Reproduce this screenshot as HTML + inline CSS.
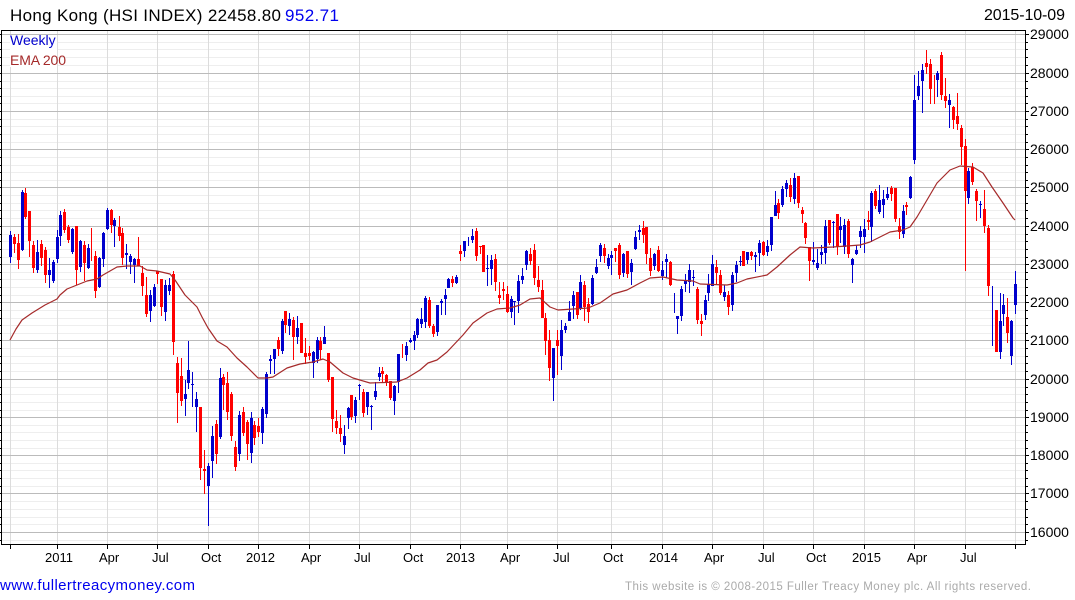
<!DOCTYPE html>
<html><head><meta charset="utf-8"><title>Hong Kong (HSI INDEX)</title>
<style>html,body{margin:0;padding:0;background:#fff;width:1075px;height:600px;overflow:hidden}svg{display:block}text{font-family:"Liberation Sans",Arial,sans-serif}</style></head>
<body>
<svg width="1075" height="600" viewBox="0 0 1075 600" xmlns="http://www.w3.org/2000/svg">
<g fill="none" shape-rendering="crispEdges">
<path stroke="#eeeeee" d="M2 42.5H1025M2 49.5H1025M2 57.5H1025M2 65.5H1025M2 81.5H1025M2 88.5H1025M2 96.5H1025M2 103.5H1025M2 119.5H1025M2 126.5H1025M2 134.5H1025M2 142.5H1025M2 157.5H1025M2 165.5H1025M2 172.5H1025M2 180.5H1025M2 195.5H1025M2 203.5H1025M2 210.5H1025M2 218.5H1025M2 234.5H1025M2 241.5H1025M2 249.5H1025M2 257.5H1025M2 272.5H1025M2 279.5H1025M2 287.5H1025M2 295.5H1025M2 310.5H1025M2 318.5H1025M2 325.5H1025M2 333.5H1025M2 348.5H1025M2 356.5H1025M2 363.5H1025M2 371.5H1025M2 387.5H1025M2 394.5H1025M2 402.5H1025M2 410.5H1025M2 425.5H1025M2 432.5H1025M2 440.5H1025M2 448.5H1025M2 463.5H1025M2 470.5H1025M2 478.5H1025M2 486.5H1025M2 501.5H1025M2 509.5H1025M2 517.5H1025M2 524.5H1025M2 540.5H1025"/>
<path stroke="#dcdcdc" d="M10.5 31V544M57.5 31V544M107.5 31V544M157.5 31V544M208.5 31V544M258.5 31V544M309.5 31V544M359.5 31V544M410.5 31V544M460.5 31V544M507.5 31V544M557.5 31V544M611.5 31V544M662.5 31V544M712.5 31V544M763.5 31V544M813.5 31V544M864.5 31V544M914.5 31V544M965.5 31V544M1015.5 31V544"/>
<path stroke="#bbbbbb" d="M2 34.5H1025M2 73.5H1025M2 111.5H1025M2 149.5H1025M2 187.5H1025M2 226.5H1025M2 264.5H1025M2 302.5H1025M2 340.5H1025M2 379.5H1025M2 417.5H1025M2 455.5H1025M2 493.5H1025M2 532.5H1025"/>
<rect x="10" y="35" width="47" height="32" fill="#fff" stroke="none"/>
<!-- blue wicks -->
<path stroke="#0000cc" d="M10.5 231V263M22.5 190V251M37.5 240V273M49.5 258V288M53.5 260V283M57.5 230V263M60.5 211V246M72.5 228V254M80.5 240V272M88.5 244V269M99.5 257V288M103.5 232V267M107.5 208V230M114.5 218V247M126.5 244V269M130.5 254V274M134.5 258V283M150.5 290V322M154.5 284V307M165.5 280V321M169.5 278V295M185.5 380V416M188.5 341V389M192.5 372V407M196.5 392V432M208.5 463V526M212.5 426V478M220.5 368V439M239.5 411V461M251.5 412V463M262.5 407V444M266.5 372V418M270.5 355V374M274.5 349V374M282.5 319V354M289.5 313V335M297.5 316V344M313.5 351V378M317.5 337V363M324.5 326V344M344.5 425V454M348.5 407V429M355.5 397V423M359.5 384V400M367.5 392V415M371.5 405V430M375.5 382V400M379.5 367V381M394.5 385V415M398.5 354V393M406.5 342V361M410.5 338V343M414.5 331V350M417.5 318V338M421.5 308V328M425.5 296V328M437.5 305V336M441.5 299V315M445.5 289V315M448.5 278V288M456.5 275V284M464.5 241V257M468.5 237V246M472.5 229V243M487.5 255V286M491.5 255V285M511.5 296V318M514.5 301V325M518.5 275V313M522.5 268V284M526.5 250V270M553.5 348V401M561.5 320V370M565.5 323V333M569.5 301V321M573.5 291V319M580.5 275V310M592.5 275V305M596.5 259V274M600.5 243V262M608.5 254V269M611.5 251V275M623.5 253V277M631.5 259V285M635.5 231V250M639.5 225V240M654.5 253V270M662.5 261V280M666.5 254V278M674.5 293V313M677.5 316V334M681.5 286V321M685.5 274V292M689.5 264V293M693.5 270V286M705.5 295V320M708.5 274V301M712.5 255V286M724.5 285V301M732.5 272V311M736.5 261V282M740.5 256V266M747.5 252V264M755.5 252V272M759.5 240V266M767.5 240V256M771.5 217V251M775.5 191V216M782.5 186V207M786.5 180V197M794.5 173V204M813.5 242V265M817.5 249V270M821.5 245V264M825.5 220V264M833.5 221V248M840.5 217V243M844.5 219V254M852.5 258V283M856.5 245V255M860.5 226V248M864.5 219V253M871.5 191V242M879.5 185V214M883.5 190V218M887.5 187V200M903.5 205V238M910.5 176V199M914.5 75V164M918.5 71V100M922.5 64V113M937.5 71V97M949.5 94V128M968.5 168V204M980.5 201V218M992.5 286V346M1000.5 293V359M1003.5 294V326M1011.5 320V365M1015.5 271V314"/>
<!-- blue bodies -->
<path stroke="#0000cc" stroke-width="3" d="M10.5 235V257M22.5 192V250M37.5 252V270M49.5 270V275M53.5 262V281M57.5 237V259M60.5 215V236M72.5 229V252M80.5 241V267M88.5 248V268M99.5 258V287M103.5 233V259M107.5 210V229M114.5 220V226M126.5 253V255M130.5 256V262M134.5 259V265M150.5 295V311M154.5 287V306M165.5 285V312M169.5 285V291M185.5 394V399M188.5 370V383M192.5 384V385M196.5 399V407M208.5 466V486M212.5 436V461M220.5 378V437M239.5 415V454M251.5 418V453M262.5 409V433M266.5 374V414M270.5 359V361M274.5 349V359M282.5 321V351M289.5 319V326M297.5 328V337M313.5 352V363M317.5 340V359M324.5 337V344M344.5 436V445M348.5 408V418M355.5 400V416M359.5 385V386M367.5 392V407M371.5 406V407M375.5 391V397M379.5 373V377M394.5 386V401M398.5 354V382M406.5 346V355M410.5 340V342M414.5 335V341M417.5 319V335M421.5 319V324M425.5 298V322M437.5 305V332M441.5 301V303M445.5 295V299M448.5 279V288M456.5 277V283M464.5 241V251M472.5 236V240M487.5 268V269M491.5 260V269M511.5 299V312M514.5 301V302M518.5 281V301M522.5 276V280M526.5 251V265M553.5 348V378M561.5 330V356M565.5 326V330M569.5 312V321M573.5 295V306M580.5 282V309M592.5 278V304M596.5 267V273M600.5 245V256M608.5 258V266M611.5 255V258M623.5 254V273M631.5 263V272M635.5 237V249M639.5 230V232M654.5 254V266M662.5 270V276M666.5 259V262M677.5 316V319M681.5 289V316M685.5 281V284M689.5 270V282M693.5 277V278M705.5 300V315M708.5 284V293M712.5 264V286M724.5 292V297M732.5 275V305M736.5 265V273M740.5 261V262M747.5 252V260M755.5 255V257M759.5 243V253M767.5 246V252M771.5 217V245M775.5 205V216M782.5 189V205M786.5 183V189M794.5 178V199M813.5 260V262M817.5 263V268M821.5 252V255M825.5 226V253M833.5 222V223M840.5 226V230M844.5 225V247M852.5 259V265M856.5 250V254M860.5 231V237M864.5 229V237M871.5 193V227M879.5 200V212M883.5 199V205M887.5 194V198M903.5 211V234M910.5 177V198M914.5 100V160M918.5 86V96M922.5 70V81M937.5 73V80M949.5 100V105M968.5 171V198M980.5 204V205M1000.5 321V352M1003.5 305V314M1011.5 321V356M1015.5 284V305"/>
<!-- red wicks -->
<path stroke="#ff0000" d="M14.5 234V253M18.5 234V269M25.5 188V219M29.5 211V257M33.5 241V273M41.5 240V266M45.5 247V283M64.5 209V233M68.5 225V243M76.5 226V285M84.5 241V281M91.5 228V261M95.5 251V298M111.5 209V233M119.5 216V241M122.5 228V265M138.5 237V266M142.5 266V296M146.5 277V317M157.5 271V284M161.5 279V316M173.5 271V355M177.5 357V423M181.5 358V406M200.5 407V480M204.5 450V494M216.5 420V464M223.5 374V410M227.5 372V420M231.5 392V441M235.5 441V471M243.5 407V436M247.5 420V460M254.5 421V445M258.5 418V437M278.5 337V356M285.5 311V333M293.5 317V360M301.5 323V353M305.5 338V364M309.5 346V360M320.5 337V360M328.5 353V382M332.5 377V432M336.5 410V434M340.5 415V442M351.5 395V420M363.5 389V417M382.5 367V382M386.5 374V386M390.5 381V400M402.5 344V358M429.5 297V328M433.5 324V337M452.5 276V287M460.5 245V261M476.5 228V261M480.5 246V254M483.5 245V272M495.5 254V291M499.5 282V304M503.5 282V300M507.5 286V313M530.5 248V265M534.5 244V285M538.5 266V292M542.5 280V318M545.5 313V355M549.5 330V381M557.5 330V375M577.5 292V319M584.5 281V321M588.5 298V323M604.5 244V263M615.5 248V262M619.5 243V279M627.5 251V278M643.5 221V243M646.5 227V264M650.5 248V276M658.5 246V272M670.5 261V286M697.5 287V324M701.5 314V336M716.5 260V284M720.5 270V295M728.5 291V315M743.5 251V266M751.5 251V260M763.5 241V256M778.5 199V219M790.5 178V202M798.5 176V208M802.5 207V223M805.5 222V244M809.5 247V281M829.5 220V245M837.5 214V255M848.5 219V258M868.5 211V230M875.5 189V209M891.5 186V201M895.5 188V222M899.5 218V239M906.5 202V215M926.5 50V74M930.5 59V104M934.5 75V104M941.5 52V100M945.5 78V108M953.5 106V129M957.5 93V130M961.5 125V165M965.5 139V271M972.5 163V185M976.5 189V221M984.5 190V233M988.5 225V296M996.5 310V352M1007.5 298V343"/>
<!-- red bodies -->
<path stroke="#ff0000" stroke-width="3" d="M14.5 237V244M18.5 243V260M25.5 193V217M29.5 211V241M33.5 245V268M41.5 244V258M45.5 250V275M64.5 212V230M68.5 227V240M76.5 226V270M84.5 245V263M95.5 256V291M111.5 210V225M119.5 227V236M122.5 233V258M138.5 259V266M142.5 273V286M146.5 295V314M157.5 271V274M161.5 279V307M173.5 274V342M177.5 363V393M181.5 376V401M200.5 407V468M204.5 469V471M216.5 424V454M223.5 377V385M227.5 383V412M231.5 394V436M235.5 447V467M243.5 412V433M247.5 422V444M254.5 425V438M258.5 426V432M278.5 340V349M285.5 311V325M293.5 320V337M301.5 323V353M305.5 353V357M309.5 353V356M320.5 341V350M328.5 353V380M332.5 377V419M336.5 421V428M340.5 428V434M351.5 395V417M363.5 392V413M382.5 371V374M386.5 375V382M390.5 381V398M429.5 300V326M433.5 326V334M452.5 279V283M460.5 251V254M476.5 231V256M480.5 246V247M483.5 245V272M495.5 259V282M499.5 295V298M503.5 289V291M507.5 294V312M530.5 254V261M534.5 250V278M538.5 280V287M542.5 290V318M545.5 318V341M549.5 340V368M557.5 340V346M577.5 292V315M584.5 285V307M588.5 304V312M604.5 248V256M615.5 248V251M619.5 245V275M627.5 251V274M643.5 228V235M646.5 227V254M650.5 258V271M658.5 250V271M670.5 262V285M697.5 289V320M701.5 321V324M716.5 267V273M720.5 275V293M728.5 295V307M743.5 251V266M751.5 252V256M763.5 242V255M778.5 203V213M790.5 185V197M798.5 176V203M802.5 210V214M805.5 223V238M809.5 247V261M829.5 220V243M837.5 214V247M848.5 221V254M868.5 220V222M875.5 191V206M891.5 188V194M895.5 188V219M899.5 226V232M906.5 205V207M926.5 63V67M930.5 64V89M941.5 55V95M945.5 96V101M953.5 107V120M957.5 116V124M961.5 128V147M965.5 146V191M972.5 167V182M976.5 191V201M984.5 209V226M988.5 228V286M996.5 310V352M1007.5 317V333"/>
<!-- axes -->
<path stroke="#000000" d="M1.5 30V544M1 30.5H1026M1025.5 30V545M1 544.5H1026"/>
<path stroke="#000000" d="M1026 34.5H1029M1026 73.5H1029M1026 111.5H1029M1026 149.5H1029M1026 187.5H1029M1026 226.5H1029M1026 264.5H1029M1026 302.5H1029M1026 340.5H1029M1026 379.5H1029M1026 417.5H1029M1026 455.5H1029M1026 493.5H1029M1026 532.5H1029M1026 42.5H1028M1026 49.5H1028M1026 57.5H1028M1026 65.5H1028M1026 81.5H1028M1026 88.5H1028M1026 96.5H1028M1026 103.5H1028M1026 119.5H1028M1026 126.5H1028M1026 134.5H1028M1026 142.5H1028M1026 157.5H1028M1026 165.5H1028M1026 172.5H1028M1026 180.5H1028M1026 195.5H1028M1026 203.5H1028M1026 210.5H1028M1026 218.5H1028M1026 234.5H1028M1026 241.5H1028M1026 249.5H1028M1026 257.5H1028M1026 272.5H1028M1026 279.5H1028M1026 287.5H1028M1026 295.5H1028M1026 310.5H1028M1026 318.5H1028M1026 325.5H1028M1026 333.5H1028M1026 348.5H1028M1026 356.5H1028M1026 363.5H1028M1026 371.5H1028M1026 387.5H1028M1026 394.5H1028M1026 402.5H1028M1026 410.5H1028M1026 425.5H1028M1026 432.5H1028M1026 440.5H1028M1026 448.5H1028M1026 463.5H1028M1026 470.5H1028M1026 478.5H1028M1026 486.5H1028M1026 501.5H1028M1026 509.5H1028M1026 517.5H1028M1026 524.5H1028M1026 540.5H1028"/>
<path stroke="#000000" d="M0 34.5H1M0 42.5H1M0 49.5H1M0 57.5H1M0 65.5H1M0 73.5H1M0 81.5H1M0 88.5H1M0 96.5H1M0 103.5H1M0 111.5H1M0 119.5H1M0 126.5H1M0 134.5H1M0 142.5H1M0 149.5H1M0 157.5H1M0 165.5H1M0 172.5H1M0 180.5H1M0 187.5H1M0 195.5H1M0 203.5H1M0 210.5H1M0 218.5H1M0 226.5H1M0 234.5H1M0 241.5H1M0 249.5H1M0 257.5H1M0 264.5H1M0 272.5H1M0 279.5H1M0 287.5H1M0 295.5H1M0 302.5H1M0 310.5H1M0 318.5H1M0 325.5H1M0 333.5H1M0 340.5H1M0 348.5H1M0 356.5H1M0 363.5H1M0 371.5H1M0 379.5H1M0 387.5H1M0 394.5H1M0 402.5H1M0 410.5H1M0 417.5H1M0 425.5H1M0 432.5H1M0 440.5H1M0 448.5H1M0 455.5H1M0 463.5H1M0 470.5H1M0 478.5H1M0 486.5H1M0 493.5H1M0 501.5H1M0 509.5H1M0 517.5H1M0 524.5H1M0 532.5H1M0 540.5H1"/>
<path stroke="#000000" d="M10.5 544V549M57.5 544V549M107.5 544V549M157.5 544V549M208.5 544V549M258.5 544V549M309.5 544V549M359.5 544V549M410.5 544V549M460.5 544V549M507.5 544V549M557.5 544V549M611.5 544V549M662.5 544V549M712.5 544V549M763.5 544V549M813.5 544V549M864.5 544V549M914.5 544V549M965.5 544V549M1015.5 544V549"/>
</g>
<!-- EMA -->
<polyline fill="none" stroke="#a52a2a" stroke-width="1.2" stroke-linejoin="round" points="10,340 16,329 22,320 32,313 45,305 57,299 60,295 67,289 77,285 87,281 97,279 103,275 110,271 117,267 127,266 140,266 147,270 157,271 170,274 175,280 185,295 192,302 197,307 202,317 208,328 217,341 227,347 237,358 247,367 258,378 267,378 273,377 287,368 300,364 313,362 323,359 330,362 343,373 353,378 370,383 397,382 407,378 420,370 428,363 437,360 447,352 463,335 473,323 487,313 497,309 510,308 520,305 530,299 540,298 550,307 558,310 573,309 588,308 600,303 613,294 627,290 640,283 650,278 663,277 677,280 693,281 700,284 727,285 737,283 747,279 767,275 777,267 790,255 800,247 813,248 833,247 860,245 870,242 890,232 903,230 910,227 917,217 927,200 937,183 950,170 960,166 973,167 983,173 992,187 1003,203 1013,218 1015,220"/>
<!-- text -->
<text x="10" y="21" font-size="17" fill="#000" textLength="271" lengthAdjust="spacing">Hong Kong (HSI INDEX) 22458.80</text>
<text x="285" y="21" font-size="17" fill="#0000ee" textLength="54" lengthAdjust="spacing">952.71</text>
<text x="984" y="20" font-size="16" fill="#000" textLength="81" lengthAdjust="spacing">2015-10-09</text>
<text x="10" y="45" font-size="14" fill="#0000cc">Weekly</text>
<text x="10" y="65" font-size="14" fill="#a52a2a" textLength="56">EMA 200</text>
<g font-size="14" fill="#000">
<text x="1030" y="39">29000</text><text x="1030" y="78">28000</text><text x="1030" y="116">27000</text><text x="1030" y="154">26000</text><text x="1030" y="192">25000</text><text x="1030" y="231">24000</text><text x="1030" y="269">23000</text><text x="1030" y="307">22000</text><text x="1030" y="345">21000</text><text x="1030" y="384">20000</text><text x="1030" y="422">19000</text><text x="1030" y="460">18000</text><text x="1030" y="498">17000</text><text x="1030" y="537">16000</text>
</g>
<g font-size="13" fill="#000">
<text x="45" y="562">2011</text><text x="99" y="562">Apr</text><text x="152" y="562">Jul</text><text x="201" y="562">Oct</text><text x="246" y="562">2012</text><text x="301" y="562">Apr</text><text x="354" y="562">Jul</text><text x="403" y="562">Oct</text><text x="446" y="562">2013</text><text x="500" y="562">Apr</text><text x="553" y="562">Jul</text><text x="603" y="562">Oct</text><text x="649" y="562">2014</text><text x="704" y="562">Apr</text><text x="758" y="562">Jul</text><text x="806" y="562">Oct</text><text x="852" y="562">2015</text><text x="907" y="562">Apr</text><text x="960" y="562">Jul</text>
</g>
<text x="0" y="590" font-size="15" fill="#0000ee" textLength="195" lengthAdjust="spacing">www.fullertreacymoney.com</text>
<text x="625" y="590" font-size="11.5" fill="#aaaaaa" textLength="406" lengthAdjust="spacing">This website is © 2008-2015 Fuller Treacy Money plc. All rights reserved.</text>
</svg>
</body></html>
